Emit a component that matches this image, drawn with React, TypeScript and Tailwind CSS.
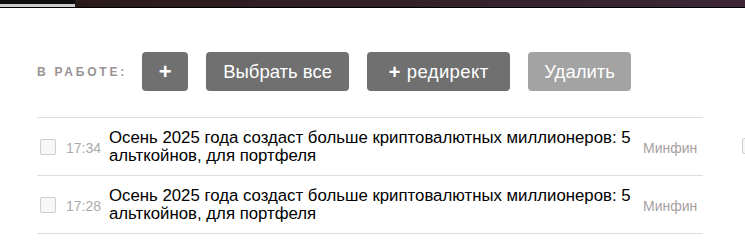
import React from "react";

const rows = [
  { time: "17:34", title: "Осень 2025 года создаст больше криптовалютных миллионеров: 5 альткойнов, для портфеля", src: "Минфин" },
  { time: "17:28", title: "Осень 2025 года создаст больше криптовалютных миллионеров: 5 альткойнов, для портфеля", src: "Минфин" },
];

function Checkbox() {
  return <div className="w-[16px] h-[16px] shrink-0 border border-[#cfcfcf] bg-[#f7f7f7] rounded-[2px]" />;
}

export default function App() {
  return (
    <div className="w-[745px] h-[245px] overflow-hidden bg-white" style={{ fontFamily: '"Liberation Sans", Arial, sans-serif' }}>
      <div className="flex h-[8px] border-b border-black">
        <div className="w-[75px] h-full bg-[#0d0d0d] flex flex-col">
          <div className="h-[4px]" />
          <div className="h-[3px] bg-[#cccccc]" />
        </div>
        <div className="flex-1 h-full bg-gradient-to-r from-[#2a1b1a] to-[#3d2737]" />
      </div>
      <div className="flex items-center pl-[37px] pt-[40px] h-[87px]">
        <span className="text-[12px] font-bold tracking-[2.8px] text-[#999393] mr-[15px]">В РАБОТЕ:</span>
        <div className="flex gap-[18px]">
          <div className="h-[39px] w-[46px] rounded-[4px] bg-[#707070] text-white flex items-center justify-center text-[22px] font-bold">+</div>
          <div className="h-[39px] w-[143px] rounded-[4px] bg-[#707070] text-white flex items-center justify-center text-[18.5px]">Выбрать все</div>
          <div className="h-[39px] w-[143px] rounded-[4px] bg-[#707070] text-white flex items-center justify-center text-[18.5px] tracking-[0.4px]"><span className="font-bold text-[20px] mr-[6px]">+</span>редирект</div>
          <div className="h-[39px] w-[103px] rounded-[4px] bg-[#a3a3a3] text-white flex items-center justify-center text-[18.5px]">Удалить</div>
        </div>
      </div>
      <div className="flex gap-[37px] pl-[37px] pt-[22px]">
        <div className="w-[666px] shrink-0 border-t border-[#dddddd]">
          {rows.map((r, i) => (
            <div key={i} className="flex items-center h-[58px] border-b border-[#dddddd] pl-[3px]">
              <Checkbox />
              <span className="ml-[10px] w-[43px] shrink-0 text-[14px] text-[#aaaaaa] mt-[4px]">{r.time}</span>
              <span className="w-[528px] shrink-0 text-[16.8px] leading-[18px] text-black">{r.title}</span>
              <span className="ml-[6px] text-[14px] text-[#a8a0a0] mt-[4px]">{r.src}</span>
            </div>
          ))}
        </div>
        <div className="w-[666px] shrink-0">
          <div className="flex items-center h-[58px] pl-[2px]">
            <Checkbox />
          </div>
        </div>
      </div>
    </div>
  );
}
